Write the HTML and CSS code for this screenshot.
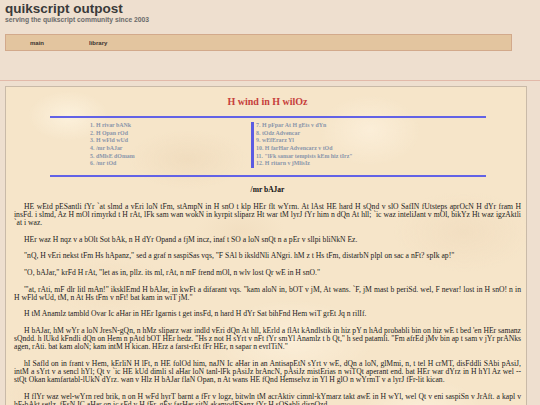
FILE: index.html
```html
<!DOCTYPE html>
<html>
<head>
<meta charset="utf-8">
<title>quikscript outpost</title>
<link rel="stylesheet" href="styles.css">
</head>
<body>
<header class="site-header">
  <h1 class="site-title">quikscript outpost</h1>
  <div class="tagline">serving the quikscript community since 2003</div>
</header>
<nav class="nav">
  <a class="nav-link nav-main" href="#">main</a>
  <a class="nav-link" href="#">library</a>
</nav>
<div class="rule"></div>
<main class="page">
  <h2 class="book-title">H wind in H wilOz</h2>
  <div class="blue-rule"></div>
  <div class="toc">
    <ul class="toc-col toc-left">
      <li>1. H rivar bANk</li>
      <li>2. H Opan rOd</li>
      <li>3. H wFld wUd</li>
      <li>4. /mr bAJar</li>
      <li>5. dMlsE dOmam</li>
      <li>6. /mr tOd</li>
    </ul>
    <ul class="toc-col toc-right">
      <li>7. H pFpar At H gEts v dYn</li>
      <li>8. tOdz Advencar</li>
      <li>9. wEfErarz Yl</li>
      <li>10. H farHar Advencarz v tOd</li>
      <li>11. "lFk samar tempists kEm hiz tIrz"</li>
      <li>12. H ritarn v jMlisIz</li>
    </ul>
  </div>
  <div class="blue-rule"></div>
  <h3 class="chapter-title">/mr bAJar</h3>
  <p>HE wEtd pESantli fYr `at slmd a vEri loN tFm, stAmpN in H snO t klp HEr flt wYrm. At lAst HE hard H sQnd v slO SafIN fUtsteps aprOcN H dYr fram H insFd. i slmd, Az H mOl rimyrkd t H rAt, lFk sam wan wokN in kyrpit sliparz Ht war tM lyrJ fYr him n dQn At hll; `ic waz inteliJant v mOl, bikYz Ht waz igzAktli `at i waz.</p>
  <p>HEr waz H nqz v a bOlt Sot bAk, n H dYr Opand a fjM incz, inaf t SO a loN snQt n a pEr v sllpi bliNkN Ez.</p>
  <p>"nQ, H vEri nekst tFm Hs hApanz," sed a graf n saspiSas vqs, "F SAl b iksldNli ANgri. hM z t Hs tFm, distarbN plpl on sac a nFt? spIk ap!"</p>
  <p>"O, bAJar," krFd H rAt, "let as in, pllz. its ml, rAt, n mF frend mOl, n wlv lost Qr wE in H snO."</p>
  <p>"'at, rAti, mF dlr litl mAn!" iksklEmd H bAJar, in kwFt a difarant vqs. "kam aloN in, bOT v jM, At wans. `F, jM mast b periSd. wel, F nevar! lost in H snO! n in H wFld wUd, tM, n At Hs tFm v nFt! bat kam in wiT jM."</p>
  <p>H tM Anamlz tambld Ovar Ic aHar in HEr Igarnis t get insFd, n hard H dYr Sat bihFnd Hem wiT grEt Jq n rilIf.</p>
  <p class="tight">H bAJar, hM wYr a loN JresN-gQn, n hMz sliparz war indld vEri dQn At hll, kErld a flAt kAndlstik in hiz pY n hAd probabli bin on hiz wE t bed 'en HEr samanz sQndd. h lUkd kFndli dQn on Hem n pAtd bOT HEr hedz. "Hs z not H sYrt v nFt fYr smYl Anamlz t b Qt," h sed patamli. "Fm afrEd jMv bin ap t sam v jYr prANks agen, rAti. bat kam aloN; kam intM H kican. HErz a farst-rEt fFr HEr, n sapar n evrlTiN."</p>
  <p>hI Safld on in frant v Hem, kErliN H lFt, n HE folOd him, naJN Ic aHar in an AntisapEtN sYrt v wE, dQn a loN, glMmi, n, t tel H crMT, disFddli SAbi pAsiJ, intM a sYrt v a sencl hYl; Qt v `ic HE kUd dimli sl aHar loN tanl-lFk pAsiJz brAncN, pAsiJz mistErias n wiTQt aperant end. bat HEr war dYrz in H hYl Az wel -- stQt Okan kamfartabl-lUkN dYrz. wan v Hlz H bAJar flaN Opan, n At wans HE fQnd Hemselvz in Yl H glO n wYrmT v a lyrJ fFr-lit kican.</p>
  <p>H flYr waz wel-wYrn red brik, n on H wFd hyrT barnt a fFr v logz, bitwln tM acrAktiv cimnl-kYmarz takt awE in H wYl, wel Qt v eni saspiSn v JrAft. a kapl v hF-bAkt setlz, fEsN IC aHar on ic sFd v H fFr, gEv farHar sitN akamodESanz fYr H sOSabli dispOzd.</p>
</main>
</body>
</html>
```
FILE: styles.css
```css
html, body {
  margin: 0;
  padding: 0;
}
body {
  background: #eedfcf;
  padding: 2px 5px 0 5px;
  font-family: "Liberation Serif", "Times New Roman", serif;
  overflow: hidden;
}
.site-header {
  font-family: "Liberation Sans", Arial, sans-serif;
}
.site-title {
  margin: 0;
  font-size: 13.5px;
  line-height: 14px;
  font-weight: bold;
  color: #3a3a3a;
}
.tagline {
  font-size: 6.75px;
  line-height: 7px;
  font-weight: bold;
  color: #6b6b6b;
}
.nav {
  margin-top: 11px;
  width: 505px;
  height: 15px;
  background: #e3c59f;
  border: 1px solid #d2a98b;
  display: flex;
  align-items: center;
  font-family: "Liberation Sans", Arial, sans-serif;
}
.nav-link {
  font-size: 6px;
  font-weight: bold;
  color: #3a3330;
  text-decoration: none;
}
.nav-main {
  margin-left: 24px;
  margin-right: 45px;
}
.rule {
  margin: 29px -5px 0 -5px;
  height: 0;
  border-top: 1px solid #e2b9a9;
}
.page {
  margin-top: 5px;
  width: 507px;
  padding: 0 5px 40px 8px;
  border: 1px solid #c9baa8;
  border-bottom: none;
  color: #222;
  background-color: #f6e5c9;
  background-image:
    radial-gradient(ellipse 40px 25px at 12% 8%, rgba(255,246,228,0.7), rgba(255,246,228,0) 100%),
    radial-gradient(ellipse 60px 30px at 35% 20%, rgba(236,214,182,0.55), rgba(236,214,182,0) 100%),
    radial-gradient(ellipse 50px 35px at 70% 12%, rgba(255,244,226,0.6), rgba(255,244,226,0) 100%),
    radial-gradient(ellipse 70px 40px at 88% 40%, rgba(238,216,186,0.5), rgba(238,216,186,0) 100%),
    radial-gradient(ellipse 60px 30px at 20% 55%, rgba(240,219,188,0.5), rgba(240,219,188,0) 100%),
    radial-gradient(ellipse 80px 40px at 55% 70%, rgba(255,245,228,0.55), rgba(255,245,228,0) 100%),
    radial-gradient(ellipse 50px 30px at 8% 85%, rgba(238,216,186,0.5), rgba(238,216,186,0) 100%),
    radial-gradient(ellipse 60px 35px at 80% 90%, rgba(255,245,228,0.55), rgba(255,245,228,0) 100%),
    radial-gradient(ellipse 45px 25px at 45% 40%, rgba(237,215,183,0.45), rgba(237,215,183,0) 100%);
}
.book-title {
  margin: 9px 0 0 0;
  text-align: center;
  font-size: 10px;
  line-height: 11px;
  font-weight: bold;
  color: #c6403c;
}
.blue-rule {
  width: 436px;
  height: 2px;
  margin: 9px auto 0 auto;
  background: #6262e6;
}
.toc {
  display: flex;
  margin-top: 4px;
  margin-bottom: -2px;
  padding-left: 76px;
}
.toc-col {
  list-style: none;
  margin: 0;
  padding: 0;
  font-size: 5.9px;
  line-height: 7.65px;
  font-weight: bold;
  color: #8a95aa;
}
.toc-left {
  width: 161px;
}
.toc-right {
  border-left: 3px solid #5b5be2;
  padding-left: 2px;
}
.toc + .blue-rule {
  margin-top: 9px;
}
.chapter-title {
  margin: 8.5px 0 0 0;
  text-align: center;
  font-size: 7.5px;
  line-height: 9px;
  font-weight: bold;
  color: #111;
}
.page p {
  margin: 8.4px 0 0 0;
  font-size: 7.65px;
  line-height: 8.2px;
  text-align: justify;
  text-indent: 10px;
}
.page p.tight {
  word-spacing: -0.12px;
}
```
